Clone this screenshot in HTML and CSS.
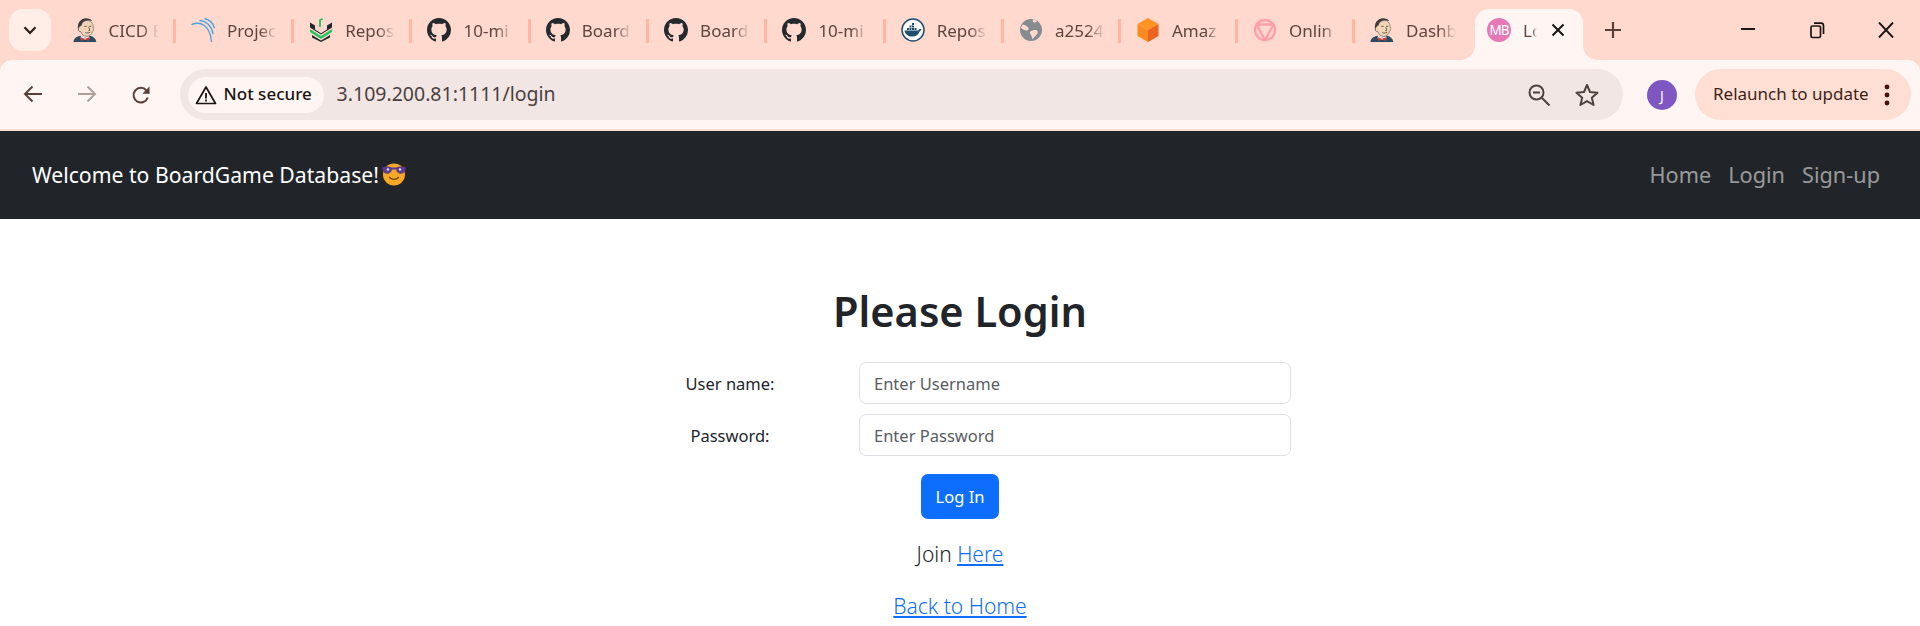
FILE: index.html
```html
<!DOCTYPE html>
<html lang="en">
<head>
<meta charset="utf-8">
<title>Login</title>
<link rel="stylesheet" href="styles.css">
</head>
<body>
<svg class="defs" width="0" height="0" aria-hidden="true">
  <symbol id="i-jenkins" viewBox="0 0 24 24">
    <path fill="#2d4b60" d="M.5 24c.2-3.500 2.600-5.300 6.500-6.300l5 1.800 5-1.800c3.600.8 6 2.800 6.300 6.300z"/>
    <path fill="#fff" d="M8 18l4 1.500 4-1.500 .5 2.500-4.500 1.500-4.500-1.500z"/>
    <path fill="#3d3a3c" d="M5.300 12.500C3.300 5 8 .2 13.200.2c2.600 0 4.700 1 6 2.800-2.600-.9-5.700-.8-7.700.6-2 1.500-2.500 4-2 7l-1 3.500z"/>
    <path fill="#f0d6b7" stroke="#4a3b32" stroke-width=".5" d="M8.200 7.500c.8-3.200 3-5 6-5 3.500 0 5.800 2.500 6 6.300.1 2 1 3.800-.7 4.500-.5 2.700-2.600 5-6 5-3 0-4.600-2-5.500-4.500C6.500 14 5.300 12.800 5.300 11.200c0-1.800 1.700-3.200 2.900-3.700z"/>
    <path fill="none" stroke="#4a3b32" stroke-width=".8" d="M11.300 8.300h2.400M16 8.300h2.200M12.300 14.500c1.700.9 3.400.7 5-.5M15.800 9.300l1 3-1.400.4"/>
    <path fill="#d33833" d="M8 19.300l4 1.500 4-1.500v3.400l-4-1.200-4 1.200z"/>
  </symbol>
  <symbol id="i-arc" viewBox="0 0 24 24">
    <g fill="none" stroke="#4ea5de" stroke-width="1.400" stroke-linecap="round">
      <path d="M1 6.500C9 3 19 7 20.500 23.500"/>
      <path d="M9 2.500c6 .5 11.500 5 13 13"/>
      <path d="M14 .8c4.500 1 8 4.500 9.300 9"/>
    </g>
  </symbol>
  <symbol id="i-repo" viewBox="0 0 24 24">
    <path fill="#23272b" d="M1 4.500l5 3v4l6 3.800 6-3.800v-4l5-3v5L12 16.500 1 9.500zM3 17l9 5.500 9-5.500v2.500L12 24 3 19.500z"/>
    <path fill="#22c55e" d="M1 11l11 7 11-7v3l-11 7-11-7z"/>
    <path fill="none" stroke="#22c55e" stroke-width="1.800" d="M11 9V2.300c0-.6.8-1.100 2.800-1.100"/>
  </symbol>
  <symbol id="i-github" viewBox="0 0 16 16">
    <path fill="#24292e" d="M8 0C3.580 0 0 3.580 0 8c0 3.540 2.290 6.530 5.470 7.590.4.07.55-.17.55-.38 0-.19-.01-.82-.01-1.490-2.010.37-2.530-.49-2.690-.94-.09-.23-.48-.94-.82-1.130-.28-.15-.68-.52-.01-.53.63-.01 1.080.58 1.230.82.72 1.210 1.870.87 2.330.66.07-.52.28-.87.51-1.070-1.780-.2-3.640-.89-3.640-3.950 0-.87.31-1.590.82-2.150-.08-.2-.36-1.020.08-2.120 0 0 .67-.21 2.200.82.64-.18 1.320-.27 2-.27.68 0 1.360.09 2 .27 1.530-1.040 2.200-.82 2.200-.82.44 1.100.16 1.920.08 2.120.51.56.82 1.270.82 2.150 0 3.070-1.870 3.750-3.650 3.950.29.25.54.73.54 1.480 0 1.070-.01 1.930-.01 2.200 0 .21.15.46.55.38A8.013 8.013 0 0016 8c0-4.420-3.580-8-8-8z"/>
  </symbol>
  <symbol id="i-docker" viewBox="0 0 24 24">
    <circle cx="12" cy="12" r="11" fill="#fff" stroke="#1f4f6d" stroke-width="1.500"/>
    <path fill="#1f4f6d" d="M3.500 12.500h13.800c.5-1.200 1.800-1.700 3.200-1.300-.3 1-.9 1.700-1.800 2-1 3.500-3.800 5.300-7.200 5.300-4 0-7.300-1.700-8-6z"/>
    <path fill="#1f4f6d" d="M6 10h2v2H6zM8.500 10h2v2h-2zM11 10h2v2h-2zM13.500 10h2v2h-2zM8.500 7.500h2v2h-2zM11 7.500h2v2h-2zM11 5h2v2h-2z"/>
  </symbol>
  <symbol id="i-globe" viewBox="0 0 24 24">
    <circle cx="12" cy="12" r="11" fill="#858b8f"/>
    <path fill="#ffd9cd" d="M4 6.500c2 .5 4.500 1.500 5.500 3.500.7 1.500-.8 2.800-2.300 2.500C5.500 12 3 11 1.800 10 2 8.700 3 7.500 4 6.500zM12 13c2-.7 4.500-1.500 6-.5 1.300 1 1 2.800-.5 4.300-1.300 1.300-2.800 3-4 4.500-.5-2.500-1.500-4.300-2.500-6-.5-1 0-1.900 1-2.300zM14 1.300c1.500.3 3 1 4 1.800-1 1.200-2.200 1.900-3.300 1.500-.9-.3-1.100-1.900-.7-3.300z"/>
  </symbol>
  <symbol id="i-cube" viewBox="0 0 24 24">
    <path fill="#ff9424" d="M12 0l10.500 6L12 12 1.500 6z"/>
    <path fill="#f98a1f" d="M1.500 6L12 12v12L1.500 18z"/>
    <path fill="#ec6420" d="M22.500 6L12 12v12l10.500-6z"/>
  </symbol>
  <symbol id="i-online" viewBox="0 0 24 24">
    <circle cx="12" cy="12" r="10" fill="none" stroke="#ff9fab" stroke-width="2.400"/>
    <path fill="none" stroke="#ff9fab" stroke-width="2.400" stroke-linejoin="round" d="M3.500 6.500h17L12 22z"/>
  </symbol>
</svg>

<header class="browser">
  <div class="tabstrip">
    <button class="tab-search" aria-label="Search tabs">
      <svg width="14" height="9" viewBox="0 0 14 9"><path fill="none" stroke="#2b1f1b" stroke-width="2.200" d="M1.500 1.200L7 7l5.500-5.800"/></svg>
    </button>
    <div class="tabs">
      <div class="tab"><svg class="favicon"><use href="#i-jenkins"/></svg><span class="tab-title">CICD E</span></div><i class="sep"></i>
      <div class="tab"><svg class="favicon"><use href="#i-arc"/></svg><span class="tab-title">Projec</span></div><i class="sep"></i>
      <div class="tab"><svg class="favicon"><use href="#i-repo"/></svg><span class="tab-title">Repos</span></div><i class="sep"></i>
      <div class="tab"><svg class="favicon"><use href="#i-github"/></svg><span class="tab-title">10-mi</span></div><i class="sep"></i>
      <div class="tab"><svg class="favicon"><use href="#i-github"/></svg><span class="tab-title">Board</span></div><i class="sep"></i>
      <div class="tab"><svg class="favicon"><use href="#i-github"/></svg><span class="tab-title">Board</span></div><i class="sep"></i>
      <div class="tab"><svg class="favicon"><use href="#i-github"/></svg><span class="tab-title">10-mi</span></div><i class="sep"></i>
      <div class="tab"><svg class="favicon"><use href="#i-docker"/></svg><span class="tab-title">Repos</span></div><i class="sep"></i>
      <div class="tab tab-narrow"><svg class="favicon"><use href="#i-globe"/></svg><span class="tab-title">a2524</span></div><i class="sep"></i>
      <div class="tab tab-narrow"><svg class="favicon"><use href="#i-cube"/></svg><span class="tab-title">Amaz</span></div><i class="sep"></i>
      <div class="tab tab-narrow"><svg class="favicon"><use href="#i-online"/></svg><span class="tab-title">Onlin</span></div><i class="sep"></i>
      <div class="tab tab-last"><svg class="favicon"><use href="#i-jenkins"/></svg><span class="tab-title">Dashb</span></div>
      <div class="tab-active">
        <span class="mb-icon">MB</span>
        <span class="tab-title active-title">Lo</span>
        <svg class="tab-close" width="14" height="14" viewBox="0 0 14 14"><path stroke="#1c1412" stroke-width="2" d="M1.500 1.500l11 11M12.500 1.500l-11 11"/></svg>
      </div>
      <svg class="new-tab" width="16" height="16" viewBox="0 0 16 16"><path stroke="#5a4038" stroke-width="2.200" d="M8 0v16M0 8h16"/></svg>
    </div>
    <div class="window-controls">
      <span class="win-btn"><svg width="16" height="16" viewBox="0 0 16 16"><path stroke="#1c1412" stroke-width="2" d="M1 7h14"/></svg></span>
      <span class="win-btn"><svg width="16" height="18" viewBox="0 0 16 18"><path fill="none" stroke="#1c1412" stroke-width="1.700" d="M2 6.500C2 5.500 2.600 5 3.500 5h6.500c1 0 1.500.5 1.500 1.500V15c0 1-.5 1.500-1.500 1.500H3.500C2.600 16.500 2 16 2 15zM5 2.200h7c1.500 0 2.500 1 2.500 2.500V13"/></svg></span>
      <span class="win-btn"><svg width="16" height="16" viewBox="0 0 16 16"><path stroke="#1c1412" stroke-width="1.900" d="M1 .5l14 15M15 .5L1 15.500"/></svg></span>
    </div>
  </div>

  <div class="toolbar">
    <svg class="nav-icon" width="20" height="18" viewBox="0 0 20 18"><path fill="none" stroke="#5a4038" stroke-width="2" d="M19 9H2.500M9.500 1.500L2 9l7.500 7.500"/></svg>
    <svg class="nav-icon nav-off" width="20" height="18" viewBox="0 0 20 18"><path fill="none" stroke="#ae9f9a" stroke-width="2" d="M1 9h16.500M10.500 1.500L18 9l-7.500 7.500"/></svg>
    <svg class="nav-icon" width="20" height="20" viewBox="0 0 20 20"><path fill="none" stroke="#5a4038" stroke-width="2" d="M16.800 12.500a7.300 7.300 0 1 1-1.300-7L18 8"/><path fill="#5a4038" d="M18.500 1.500v7.200h-7.200z"/></svg>
    <div class="omnibox">
      <div class="security">
        <svg width="22" height="20" viewBox="0 0 22 20"><path fill="none" stroke="#1c1412" stroke-width="1.700" stroke-linejoin="round" d="M11 2L1.500 18.500h19z"/><path stroke="#1c1412" stroke-width="1.800" d="M11 8v5.500M11 14.500v2"/></svg>
        <span>Not secure</span>
      </div>
      <span class="url">3.109.200.81:1111/login</span>
      <div class="omni-actions">
        <svg width="24" height="24" viewBox="0 0 24 24"><g fill="none" stroke="#4f423e" stroke-width="2"><circle cx="9.500" cy="9.500" r="7"/><path d="M6 9.500h7M14.500 14.500l8 8"/></g></svg>
        <svg width="24" height="24" viewBox="0 0 24 24"><path fill="none" stroke="#4f423e" stroke-width="2" stroke-linejoin="round" d="M12 2l3 7 7.500.7-5.700 5 1.800 7.300-6.600-3.900L5.400 22l1.800-7.300-5.700-5L9 9z"/></svg>
      </div>
    </div>
    <span class="avatar">J</span>
    <div class="relaunch">
      <span>Relaunch to update</span>
      <svg width="6" height="24" viewBox="0 0 6 24"><g fill="#4a120c"><circle cx="3" cy="4" r="2.400"/><circle cx="3" cy="12" r="2.400"/><circle cx="3" cy="20" r="2.400"/></g></svg>
    </div>
  </div>
</header>

<nav class="navbar">
  <a class="brand" href="#">Welcome to BoardGame Database!<svg class="emoji" width="24" height="24" viewBox="0 0 24 24" role="img" aria-label="smiling face with sunglasses"><circle cx="12" cy="12.500" r="11" fill="#f9a825"/><path fill="#5c3a8c" d="M0 5.500c3-1.300 7-1.300 10 0h4c3-1.300 7-1.300 10 0l-.5 2c-.5 2.800-2.500 4.300-4.700 4.300-2.500 0-4.300-1.700-4.800-4.300h-3.900c-.5 2.600-2.300 4.300-4.800 4.300-2.200 0-4.200-1.500-4.800-4.300z"/><circle cx="6" cy="7.500" r="1.300" fill="#dcd3ee"/><circle cx="18" cy="7.500" r="1.300" fill="#dcd3ee"/><path fill="none" stroke="#6d4317" stroke-width="1.300" stroke-linecap="round" d="M7.500 15.500c2.500 2.500 6.500 2.500 9 0"/></svg></a>
  <div class="nav-links">
    <a href="#">Home</a>
    <a href="#">Login</a>
    <a href="#">Sign-up</a>
  </div>
</nav>

<main class="page">
  <h1>Please Login</h1>
  <form class="login-form">
    <label for="user">User name:</label>
    <input id="user" type="text" placeholder="Enter Username">
    <label for="pass">Password:</label>
    <input id="pass" type="password" placeholder="Enter Password">
  </form>
  <button class="login-btn" type="button">Log In</button>
  <p class="join">Join <a href="#">Here</a></p>
  <p class="back"><a href="#">Back to Home</a></p>
</main>
</body>
</html>
```
FILE: styles.css
```css
* { box-sizing: border-box; }
html, body { margin: 0; height: 626px; overflow: hidden; background: #fff; }
body { font-family: "Noto Sans", "Open Sans", sans-serif; color: #212529; }
.defs { display: block; height: 0; }

.browser { background: #ffd9cd; }
.tabstrip { height: 60px; display: flex; padding-left: 9px; }
.tab-search {
  width: 42px; height: 42px; margin-top: 9px; border: 0; border-radius: 14px;
  background: #ffeee8; display: flex; align-items: center; justify-content: center; padding: 0;
}
.tabs { display: flex; align-items: flex-start; margin-left: 6.600px; }
.tab { width: 115.300px; height: 42px; margin-top: 9px; display: flex; align-items: center; padding-left: 15px; gap: 12px; color: #5f453c; }
.tab-narrow { width: 114px; }
.tab-last { width: 120px; }
.favicon { width: 24px; height: 24px; flex: none; }
.tab-title {
  font-size: 17px; white-space: nowrap; width: 50px; flex: none;
  -webkit-mask-image: linear-gradient(90deg, #000 65%, transparent 100%);
  mask-image: linear-gradient(90deg, #000 65%, transparent 100%);
}
.sep { width: 3px; height: 24px; margin-top: 19px; background: #ffb7a3; flex: none; }

.tab-active {
  position: relative; width: 108px; height: 51px; margin-top: 9px; background: #fff6f3;
  border-radius: 14px 14px 0 0; display: flex; align-items: center; padding: 0 18px 9px 12px; color: #5f453c;
}
.tab-active::before, .tab-active::after {
  content: ""; position: absolute; bottom: 0; width: 14px; height: 14px;
}
.tab-active::before { left: -14px; background: radial-gradient(circle at 0 0, transparent 13.500px, #fff6f3 14px); }
.tab-active::after { right: -14px; background: radial-gradient(circle at 100% 0, transparent 13.500px, #fff6f3 14px); }
.mb-icon {
  width: 24px; height: 24px; border-radius: 50%; background: #e678b8; color: #fff; flex: none;
  font-size: 13.500px; display: flex; align-items: center; justify-content: center; letter-spacing: -1px;
}
.active-title { margin-left: 12px; width: 14px; }
.tab-close { margin-left: auto; flex: none; }
.new-tab { margin: 22px 0 0 22px; flex: none; }

.window-controls { margin-left: auto; display: flex; }
.win-btn { width: 69px; height: 60px; display: flex; align-items: center; justify-content: center; }

.toolbar {
  height: 69px; padding: 9px 9px 0 23px; background: #fff6f3; border-radius: 12px 12px 0 0;
  display: flex; align-items: flex-start;
}
.nav-icon { flex: none; margin-top: 16px; margin-right: 34px; }
.omnibox {
  width: 1445.400px; height: 51px; background: #f2e6e4; border-radius: 26px; margin-left: -5.400px;
  display: flex; align-items: center; padding: 0 24px 0 8px;
}
.security {
  height: 36px; width: 136px; border-radius: 18px; background: #fff6f3; display: flex; align-items: center;
  padding-left: 7px; gap: 7px; font-size: 17px; font-weight: 500; color: #1c1412; flex: none;
}
.security span, .url, .relaunch span { margin-bottom: 2px; }
.url { margin-left: 13px; font-size: 19.500px; color: #4a3f40; }
.omni-actions { margin-left: auto; display: flex; gap: 24px; }
.avatar {
  width: 30px; height: 30px; border-radius: 50%; background: #7e57c2; color: #fff; flex: none;
  margin: 11px 18px 0 24px; font-size: 14px; display: flex; align-items: center; justify-content: center;
}
.relaunch {
  width: 216px; height: 51px; border-radius: 26px; background: #ffdfd4; flex: none; color: #3d1f18;
  display: flex; align-items: center; padding-left: 18px; font-size: 17px; justify-content: space-between; padding-right: 21px;
}

.navbar {
  height: 90px; border-top: 2px solid #f7dcd3; background: #212529;
  display: flex; align-items: center; justify-content: space-between; padding: 0 40px 2px 32px;
}
.brand { color: #fff; text-decoration: none; font-size: 21.200px; display: flex; align-items: center; }
.emoji { margin-left: 3px; }
.nav-links { display: flex; gap: 17px; }
.nav-links a { color: rgba(255,255,255,.55); text-decoration: none; font-size: 21.700px; }

.page { display: flex; flex-direction: column; align-items: center; }
h1 { margin: 64px 0 0; font-size: 41.500px; font-weight: 600; line-height: 56px; }
.login-form {
  margin-top: 23px; width: 718px; display: grid; grid-template-columns: 258px 432px; row-gap: 10px; align-items: center;
}
.login-form label { text-align: center; font-size: 16.500px; }
.login-form input {
  height: 42px; width: 432px; border: 1px solid #dee2e6; border-radius: 7px; padding: 0 14px;
  font: 16.500px "Noto Sans", "Open Sans", sans-serif; color: #212529;
}
.login-form input::placeholder { color: #595c5f; opacity: 1; }
.login-btn {
  margin-top: 18px; width: 78px; height: 45px; background: #0d6efd; color: #fff; border: 0; border-radius: 7px;
  font: 16.500px "Noto Sans", "Open Sans", sans-serif; padding: 0;
}
.join, .back { margin: 0; font-size: 21px; line-height: 30px; font-weight: 300; }
.join { margin-top: 20px; }
.back { margin-top: 22px; }
.join a, .back a { color: #0d6efd; }
```
